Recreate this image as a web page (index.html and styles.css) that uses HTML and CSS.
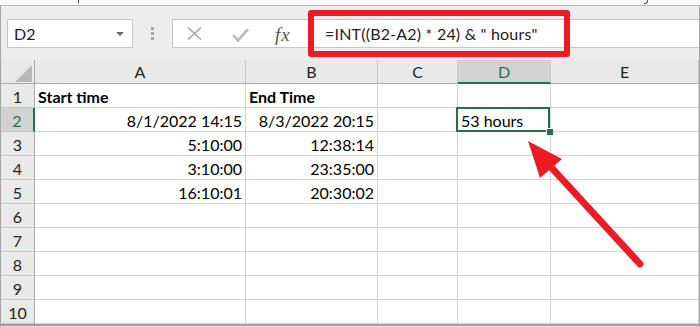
FILE: index.html
```html
<!DOCTYPE html>
<html lang="en">
<head>
  <meta charset="UTF-8">
  <title>INT hours formula</title>
  <link rel="stylesheet" href="styles.css">
</head>
<body>
  <div class="app">
    <div class="topstrip"><span class="tick"></span><span class="frag"></span></div>

    <div class="main">
      <!-- Name box + formula bar -->
      <div class="toolbar">
        <div class="namebox"><span>D2</span><span class="caret"></span></div>
        <div class="grip"><i></i><i></i><i></i></div>
        <div class="fbar">
          <div class="fbtns">
            <svg class="ico-x" width="15" height="13" viewBox="0 0 15 13"><path d="M1 0.5 L14 12.5 M14 0.5 L1 12.5" stroke="#a8a8a8" stroke-width="1.6" fill="none"/></svg>
            <svg class="ico-ok" width="17" height="14" viewBox="0 0 17 14"><path d="M1.2 7.2 L6 12.4 L16 1.2" stroke="#bdbdbd" stroke-width="2.8" fill="none"/></svg>
            <span class="fx">fx</span>
          </div>
          <div class="ftext">=INT((B2-A2) * 24) &amp; " hours"</div>
        </div>
      </div>

      <!-- Grid -->
      <div class="sheet">
        <div class="row">
          <div class="rh corner"><svg width="17" height="17" viewBox="0 0 17 17"><path d="M17 0 L17 17 L0 17 Z" fill="#b8b8b8"/></svg></div>
          <div class="ch">A</div>
          <div class="ch">B</div>
          <div class="ch">C</div>
          <div class="ch sel">D</div>
          <div class="ch">E</div>
        </div>
        <div class="row">
          <div class="rh">1</div>
          <div class="c b">Start time</div>
          <div class="c b">End Time</div>
          <div class="c"></div><div class="c"></div><div class="c"></div>
        </div>
        <div class="row">
          <div class="rh sel">2</div>
          <div class="c r">8/1/2022 14:15</div>
          <div class="c r">8/3/2022 20:15</div>
          <div class="c"></div>
          <div class="c active">53 hours</div>
          <div class="c"></div>
        </div>
        <div class="row">
          <div class="rh">3</div>
          <div class="c r">5:10:00</div>
          <div class="c r">12:38:14</div>
          <div class="c"></div><div class="c"></div><div class="c"></div>
        </div>
        <div class="row">
          <div class="rh">4</div>
          <div class="c r">3:10:00</div>
          <div class="c r">23:35:00</div>
          <div class="c"></div><div class="c"></div><div class="c"></div>
        </div>
        <div class="row">
          <div class="rh">5</div>
          <div class="c r">16:10:01</div>
          <div class="c r">20:30:02</div>
          <div class="c"></div><div class="c"></div><div class="c"></div>
        </div>
        <div class="row"><div class="rh">6</div><div class="c"></div><div class="c"></div><div class="c"></div><div class="c"></div><div class="c"></div></div>
        <div class="row"><div class="rh">7</div><div class="c"></div><div class="c"></div><div class="c"></div><div class="c"></div><div class="c"></div></div>
        <div class="row"><div class="rh">8</div><div class="c"></div><div class="c"></div><div class="c"></div><div class="c"></div><div class="c"></div></div>
        <div class="row"><div class="rh">9</div><div class="c"></div><div class="c"></div><div class="c"></div><div class="c"></div><div class="c"></div></div>
        <div class="row"><div class="rh">10</div><div class="c"></div><div class="c"></div><div class="c"></div><div class="c"></div><div class="c"></div></div>
      </div>
      <div class="footer"></div>
    </div>

    <!-- Annotations -->
    <div class="callout"></div>
    <svg class="arrow" width="700" height="327" viewBox="0 0 700 327">
      <line x1="640" y1="264" x2="550" y2="166" stroke="#ed1c24" stroke-width="7" stroke-linecap="round"/>
      <polygon points="528,141 562,159 540,178" fill="#ed1c24"/>
    </svg>
  </div>
</body>
</html>
```

FILE: styles.css
```css
body {
  margin: 0;
  font-family: Lato, "Liberation Sans", sans-serif;
  font-size: 16px;
  color: #000;
}

.app {
  position: relative;
  width: 700px;
  height: 327px;
  overflow: hidden;
  background: #ececec;
}

/* thin strip of the ribbon above */
.topstrip {
  height: 5px;
  background: #fafafa;
  border-bottom: 1px solid #b9b9b9;
  display: flex;
  align-items: flex-start;
  overflow: hidden;
}

.tick {
  margin-left: 78px;
  width: 1px;
  height: 3px;
  background: #444;
}

.frag {
  margin-left: 565px;
  width: 3px;
  height: 3px;
  border-right: 1px solid #555;
  border-bottom: 1px solid #555;
  border-bottom-right-radius: 3px;
}

.main {
  border-left: 1px solid #a6a6a6;
  border-right: 1px solid #a6a6a6;
}

.toolbar {
  height: 54px;
  box-sizing: border-box;
  padding-top: 13px;
  display: flex;
  align-items: flex-start;
  background: #ededed;
}

.namebox {
  margin-left: 6px;
  width: 126px;
  height: 29px;
  box-sizing: border-box;
  border: 1px solid #c6c6c6;
  background: #fff;
  display: flex;
  align-items: center;
  justify-content: space-between;
  padding: 0 8px 0 6px;
  color: #222;
}

.caret {
  width: 0;
  height: 0;
  border-left: 4px solid transparent;
  border-right: 4px solid transparent;
  border-top: 4px solid #6a6a6a;
}

.grip {
  margin-left: 18px;
  margin-top: 8px;
  display: flex;
  flex-direction: column;
  gap: 2px;
}

.grip i {
  display: block;
  width: 3px;
  height: 3px;
  background: #a6a6a6;
}

.fbar {
  flex: 1;
  margin-left: 18px;
  height: 29px;
  box-sizing: border-box;
  border: 1px solid #c6c6c6;
  border-right: none;
  background: #fff;
  display: flex;
  align-items: center;
}

.fbtns {
  flex: none;
  width: 152px;
  display: flex;
  align-items: center;
}

.ico-x {
  margin-left: 14px;
}

.ico-ok {
  margin-left: 30px;
  margin-top: 2px;
}

.fx {
  margin-left: 26px;
  margin-top: 2px;
  font-family: "Liberation Serif", serif;
  font-style: italic;
  font-size: 19px;
  letter-spacing: 1px;
  color: #555;
}

.ftext {
  color: #222;
  white-space: nowrap;
  letter-spacing: 0.2px;
}

/* spreadsheet grid */
.sheet {
  background: #fff;
}

.row {
  display: grid;
  grid-template-columns: 34px 211px 132px 80px 93px 1fr;
  height: 24px;
}

.row > div {
  box-sizing: border-box;
  white-space: nowrap;
  overflow: hidden;
  line-height: 20px;
}

.c {
  border-right: 1px solid #d4d4d4;
  border-bottom: 1px solid #d4d4d4;
  padding: 3px 3px 0;
}

.c.r {
  text-align: right;
  padding-right: 3px;
}

.c.b {
  font-weight: bold;
}

.c.active {
  position: relative;
  overflow: visible;
}

.c.active::before {
  content: "";
  position: absolute;
  top: -1px;
  left: -2px;
  right: 0;
  bottom: -1px;
  border: 2px solid #217346;
}

.c.active::after {
  content: "";
  position: absolute;
  right: -3px;
  bottom: -4px;
  width: 6px;
  height: 6px;
  background: #217346;
  border-left: 1px solid #fff;
  border-top: 1px solid #fff;
}

.ch {
  background: #e9e9e9;
  border-right: 1px solid #c6c6c6;
  border-bottom: 1px solid #a9a9a9;
  text-align: center;
  padding-top: 2px;
  color: #222;
}

.ch.sel {
  background: #d2d2d2;
  border-bottom: 2px solid #217346;
  color: #217346;
}

.rh {
  background: #e9e9e9;
  border-right: 1px solid #a9a9a9;
  border-bottom: 1px solid #c6c6c6;
  text-align: center;
  padding-top: 3px;
  color: #222;
}

.rh.sel {
  background: #d2d2d2;
  border-right: 2px solid #217346;
  color: #217346;
}

.rh.corner {
  border-bottom-color: #a9a9a9;
  display: flex;
  justify-content: flex-end;
  align-items: flex-end;
  padding: 0 2px 1px 0;
}

.footer {
  height: 3px;
  border-top: 2px solid #a0a0a0;
  background: #e6e6e6;
}

/* red annotations */
.callout {
  position: absolute;
  left: 308px;
  top: 10px;
  width: 262px;
  height: 47px;
  box-sizing: border-box;
  border: 6px solid #ed1c24;
  border-radius: 3px;
}

.arrow {
  position: absolute;
  top: 0;
  left: 0;
}
```
